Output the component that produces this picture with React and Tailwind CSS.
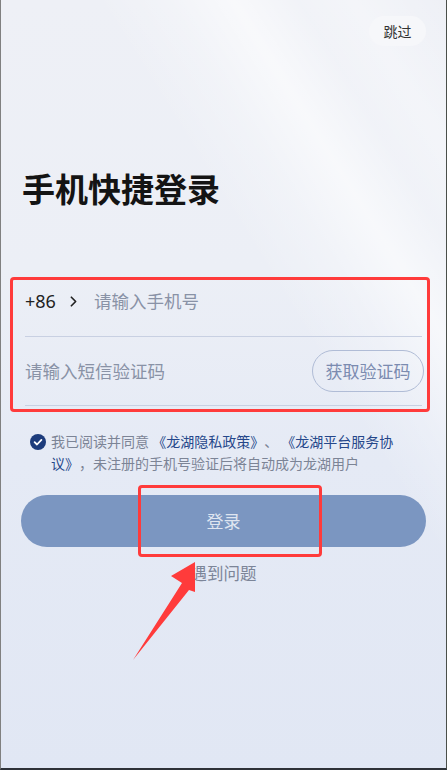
import React from "react";
import { ChevronRight } from "lucide-react";

function CheckIcon() {
  return (
    <svg width="16" height="16" viewBox="0 0 16 16" className="shrink-0">
      <circle cx="8" cy="8" r="8" fill="#1d3c7c" />
      <path d="M4.6 8.2 L7 10.5 L11.4 5.9" fill="none" stroke="#fff" strokeWidth="1.8" strokeLinecap="round" strokeLinejoin="round" />
    </svg>
  );
}

function Arrow() {
  return (
    <svg className="absolute left-0 top-0 pointer-events-none" width="447" height="770" viewBox="0 0 447 770">
      <polygon points="194,562 170,576 181,583 132,660 188,590 194,592" fill="#ff3b3b" />
    </svg>
  );
}

export default function App() {
  return (
    <div className="relative w-[447px] h-[770px] overflow-hidden border-l border-r border-b-2 border-l-[#808080] border-r-[#4a4f4a] border-b-[#2e3238] bg-[linear-gradient(58deg,rgba(255,255,255,0)_0%,rgba(255,255,255,0)_62%,rgba(255,255,255,0.25)_70%,rgba(255,255,255,0.6)_77%,rgba(255,255,255,0.2)_84%,rgba(255,255,255,0.35)_90%,rgba(255,255,255,0)_100%),linear-gradient(180deg,#eef0f6_0%,#eceff6_35%,#e5eaf5_60%,#e1e7f4_100%)] font-['Noto_Sans_CJK_SC','Noto_Sans',sans-serif]">
      <div className="flex justify-end pt-4 pr-5">
        <button className="h-[30px] w-[57px] rounded-full bg-[#f6f7fa] text-[14px] text-[#333] flex items-center justify-center">跳过</button>
      </div>

      <h1 className="mt-[122px] px-[21px] text-[33px] leading-[40px] font-bold text-[#141414]">手机快捷登录</h1>

      <div className="mt-[59px] px-6">
        <div className="h-[70px] flex items-center border-b border-[#c8d0e2]">
          <span className="text-[18px] text-[#222] font-['Noto_Sans',sans-serif]">+86</span>
          <ChevronRight size={17} strokeWidth={2.4} className="ml-[9px] text-[#222]" />
          <span className="ml-[12px] text-[17.5px] text-[#8992a6]">请输入手机号</span>
        </div>
        <div className="h-[69px] flex items-center justify-between border-b border-[#c8d0e2]">
          <span className="text-[17.5px] text-[#8992a6]">请输入短信验证码</span>
          <button className="h-[42px] w-[112px] -mr-[2px] rounded-full border border-[#b0bcd6] text-[17px] text-[#7b8bb0] flex items-center justify-center">获取验证码</button>
        </div>
      </div>

      <div className="mt-6 pl-[29px] pr-[36px] flex items-start gap-[5px]">
        <div className="pt-[4px]"><CheckIcon /></div>
        <p className="text-[14px] leading-[22px] text-[#7c8496] [text-spacing-trim:space-all]">
          我已阅读并同意 <span className="text-[#25478a]">《龙湖隐私政策》</span>、 <span className="text-[#25478a]">《龙湖平台服务协议》</span>，未注册的手机号验证后将自动成为龙湖用户
        </p>
      </div>

      <div className="mt-[21px] pl-5 pr-5">
        <button className="h-[52px] w-full rounded-full bg-[#7b96c1] text-[17px] text-[#dfe5f0]">登录</button>
      </div>

      <p className="mt-[14px] text-center text-[16.5px] leading-6 text-[#7c8598]">遇到问题</p>

      <div className="absolute left-[9px] top-[277px] w-[420px] h-[135px] border-[3px] border-[#ff3b3b] rounded-[4px] pointer-events-none" />
      <div className="absolute left-[137px] top-[485px] w-[184px] h-[72px] border-[3px] border-[#ff3b3b] rounded-[4px] pointer-events-none" />
      <Arrow />
    </div>
  );
}
